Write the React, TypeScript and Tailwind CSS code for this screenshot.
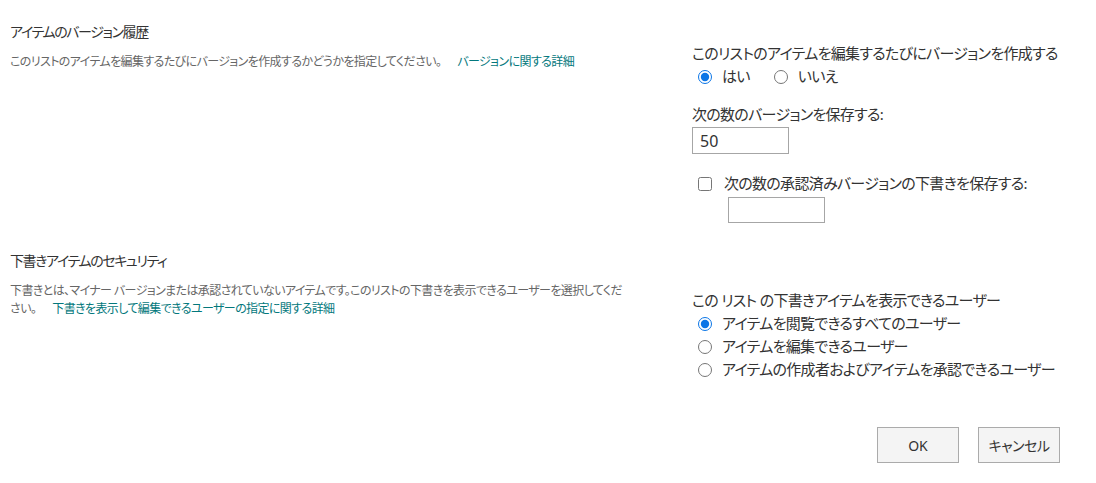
import { useState } from "react";

const font = "font-['Noto_Sans','Noto_Sans_CJK_JP',sans-serif] [font-feature-settings:'palt']";

const Radio = ({
  name,
  label,
  checked,
  onChange,
}: {
  name: string;
  label: string;
  checked: boolean;
  onChange: () => void;
}) => (
  <label className="flex items-center gap-[10px] cursor-pointer">
    <input
      type="radio"
      name={name}
      checked={checked}
      onChange={onChange}
      className="m-0 h-[14px] w-[14px] accent-[#0b75e6]"
    />
    <span>{label}</span>
  </label>
);

const App = () => {
  const [createVersion, setCreateVersion] = useState(true);
  const [viewer, setViewer] = useState(0);

  const viewers = [
    "アイテムを閲覧できるすべてのユーザー",
    "アイテムを編集できるユーザー",
    "アイテムの作成者およびアイテムを承認できるユーザー",
  ];

  return (
    <div className={`h-[483px] w-full bg-white text-[#333] ${font}`}>
      {/* version history */}
      <div className="flex h-[245px]">
        <div className="w-[692px] shrink-0 pl-[10px] pt-[22px]">
          <h2 className="text-[14px] leading-[20px] tracking-[-1.4px] text-[#333]">アイテムのバージョン履歴</h2>
          <p className="mt-[11px] w-[616px] text-[12px] leading-[18px] tracking-[-0.6px] text-[#666]">
            このリストのアイテムを編集するたびにバージョンを作成するかどうかを指定してください。
            <a href="#" className="ml-[16px] text-[#03787c]">
              バージョンに関する詳細
            </a>
          </p>
        </div>
        <div className="pt-[43px] text-[15px] leading-[21px] tracking-[-0.7px]">
          <div>このリストのアイテムを編集するたびにバージョンを作成する</div>
          <div className="mt-[2px] flex gap-[24px] pl-[6px]">
            <Radio name="ver" label="はい" checked={createVersion} onChange={() => setCreateVersion(true)} />
            <Radio name="ver" label="いいえ" checked={!createVersion} onChange={() => setCreateVersion(false)} />
          </div>
          <div className="mt-[17px]">次の数のバージョンを保存する:</div>
          <input
            type="text"
            defaultValue="50"
            className="mt-[2px] h-[27px] w-[97px] border border-[#a6a6a6] px-[7px] text-[16px] tracking-normal text-[#333] outline-none"
          />
          <label className="mt-[19px] flex items-center gap-[12px] pl-[6px]">
            <input type="checkbox" className="m-0 h-[14px] w-[14px]" />
            <span>次の数の承認済みバージョンの下書きを保存する:</span>
          </label>
          <input
            type="text"
            className="ml-[36px] mt-[3px] h-[26px] w-[97px] border border-[#a6a6a6] px-[7px] text-[16px] outline-none"
          />
        </div>
      </div>

      {/* draft item security */}
      <div className="flex h-[165px]">
        <div className="w-[692px] shrink-0 pl-[10px] pt-[6px]">
          <h2 className="text-[14px] leading-[20px] tracking-[-1.4px] text-[#333]">下書きアイテムのセキュリティ</h2>
          <p className="mt-[11px] w-[616px] text-[12px] leading-[18px] tracking-[-0.6px] text-[#666]">
            下書きとは、マイナー バージョンまたは承認されていないアイテムです。このリストの下書きを表示できるユーザーを選択してください。
            <a href="#" className="ml-[16px] text-[#03787c]">
              下書きを表示して編集できるユーザーの指定に関する詳細
            </a>
          </p>
        </div>
        <div className="pt-[44px] text-[15px] leading-[22px] tracking-[-0.7px]">
          <div>この リスト の下書きアイテムを表示できるユーザー</div>
          <div className="mt-[1px] flex flex-col pl-[6px] leading-[23px]">
            {viewers.map((v, i) => (
              <Radio key={v} name="viewer" label={v} checked={viewer === i} onChange={() => setViewer(i)} />
            ))}
          </div>
        </div>
      </div>

      <div className="flex justify-end gap-[19px] pr-[36px] pt-[17px]">
        <button className="h-[36px] w-[82px] border border-[#ababab] bg-[#f4f4f4] text-[14px] text-[#333]">
          OK
        </button>
        <button className="h-[36px] w-[82px] border border-[#ababab] bg-[#f4f4f4] text-[14px] tracking-[-0.5px] text-[#333]">
          キャンセル
        </button>
      </div>
    </div>
  );
};

export default App;
